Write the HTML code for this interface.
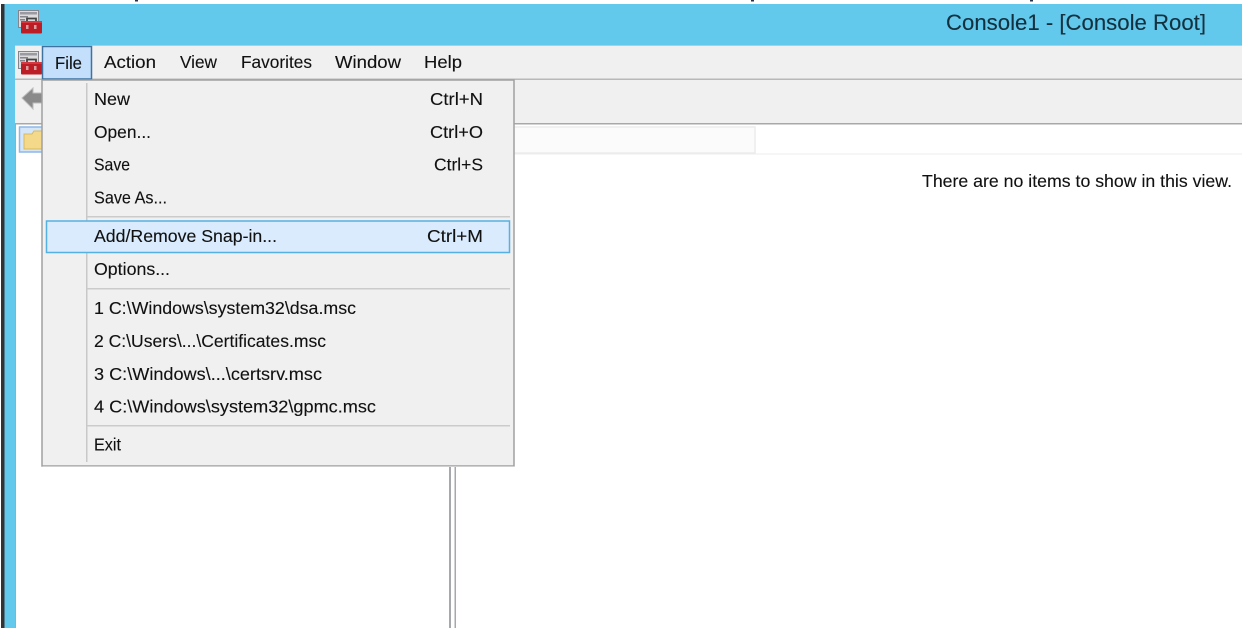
<!DOCTYPE html>
<html><head><meta charset="utf-8"><style>
html,body{margin:0;padding:0;background:#fff;width:1253px;height:642px;overflow:hidden}
svg{display:block}
text{font-family:"Liberation Sans",sans-serif;font-size:17.500px;fill:#111;stroke:#111;stroke-width:.12px;filter:blur(.25px)}
</style></head><body>
<svg width="1253" height="642" viewBox="0 0 1253 642" xmlns="http://www.w3.org/2000/svg">
<defs>
<g id="tool">
<rect x="0.500" y="0.500" width="20" height="17" fill="#dcdcdc" stroke="#85858d"/>
<rect x="2" y="2" width="17" height="2.500" fill="#9a9aa2"/>
<rect x="2" y="6" width="8" height="1.500" fill="#85858d"/>
<rect x="2" y="9" width="5" height="1.500" fill="#85858d"/>
<path d="M9 12v-3.500h9V12" fill="none" stroke="#444" stroke-width="1.800"/>
<rect x="3" y="11" width="21" height="12.500" rx="1" fill="#bd1e26"/>
<rect x="3" y="11" width="21" height="2" fill="#d63a40"/>
<rect x="8" y="15" width="2.500" height="4" fill="#d9a0a0"/>
<rect x="16" y="15" width="2.500" height="4" fill="#d9a0a0"/>
</g>
</defs>
<rect width="1253" height="642" fill="#fff"/>
<!-- top specks -->
<rect x="135" y="0" width="3" height="1.500" fill="#26324a"/>
<rect x="751" y="0" width="3" height="1.500" fill="#26324a"/>
<rect x="1030" y="0" width="3" height="1.500" fill="#26324a"/>
<!-- window frame -->
<rect x="1" y="4" width="3.500" height="624" fill="#333"/>
<rect x="4.500" y="4" width="10.500" height="624" fill="#63c9ec"/>
<rect x="15" y="45" width="1.500" height="583" fill="#a6a8ad"/>
<rect x="4.500" y="4" width="1237.500" height="41" fill="#63c9ec"/>
<!-- bars -->
<rect x="15" y="45" width="1227" height="34" fill="#f0f0f0"/>
<rect x="15" y="45" width="1227" height="1" fill="#a9cfe0"/>
<rect x="15" y="78.500" width="1227" height="1.500" fill="#b8b8b8"/>
<rect x="15" y="80" width="1227" height="43" fill="#f0f0f0"/>
<rect x="15" y="123" width="1227" height="1.500" fill="#a8a8a8"/>
<rect x="16" y="124.500" width="1226" height="503.500" fill="#fff"/>
<!-- header of right pane -->
<rect x="456" y="127" width="299" height="26" fill="#fbfbfb" stroke="#ececec" stroke-width="1.500"/>
<rect x="456" y="153.500" width="786" height="1" fill="#ececec"/>
<!-- splitter -->
<rect x="449" y="124" width="2" height="504" fill="#a6a8ad"/>
<rect x="454.500" y="124" width="1.500" height="504" fill="#a6a8ad"/>
<!-- title -->
<text x="946" y="30" textLength="260" lengthAdjust="spacingAndGlyphs" style="font-size:22.500px;fill:#13303e;stroke:#13303e">Console1 - [Console Root]</text>
<use href="#tool" x="18" y="10"/>
<use href="#tool" x="18" y="51"/>
<!-- back arrow -->
<path d="M22 98l11-10v5h10v10H33v6z" fill="#8a8a8a" stroke="#bcbcbc"/>
<!-- tree item -->
<rect x="19.500" y="127" width="24" height="25" fill="#d5e6f9" stroke="#8fb7e6" stroke-width="1.500"/>
<path d="M24 134h8l2-3h10v18H24z" fill="#f4d98a" stroke="#d9b95e"/>
<!-- menubar -->
<rect x="42.500" y="46.500" width="49" height="32.500" fill="#c4dffc" stroke="#3f729f" stroke-width="1.500"/>
<text x="55" y="69" textLength="27" lengthAdjust="spacingAndGlyphs">File</text>
<text x="104" y="68" textLength="52" lengthAdjust="spacingAndGlyphs">Action</text>
<text x="180" y="68" textLength="37" lengthAdjust="spacingAndGlyphs">View</text>
<text x="241" y="68" textLength="71" lengthAdjust="spacingAndGlyphs">Favorites</text>
<text x="335" y="68" textLength="66" lengthAdjust="spacingAndGlyphs">Window</text>
<text x="424" y="68" textLength="38" lengthAdjust="spacingAndGlyphs">Help</text>
<!-- menu -->
<rect x="42" y="80" width="472" height="386" fill="#f0f0f0" stroke="#a0a0a0" stroke-width="1.500"/>
<rect x="42.500" y="466" width="472" height="1" fill="#cfcfcf"/>
<rect x="86" y="83" width="1.500" height="379" fill="#c8c8c8"/>
<rect x="87" y="216" width="423" height="1.500" fill="#cbcbcb"/>
<rect x="87" y="288" width="423" height="1.500" fill="#cbcbcb"/>
<rect x="87" y="425" width="423" height="1.500" fill="#cbcbcb"/>
<rect x="46.500" y="221" width="463" height="31.500" fill="#d9ebfd" stroke="#54b1e2" stroke-width="1.500"/>
<text x="94" y="105" textLength="36" lengthAdjust="spacingAndGlyphs">New</text>
<text x="94" y="138" textLength="57" lengthAdjust="spacingAndGlyphs">Open...</text>
<text x="94" y="170.500" textLength="36" lengthAdjust="spacingAndGlyphs">Save</text>
<text x="94" y="203.500" textLength="73" lengthAdjust="spacingAndGlyphs">Save As...</text>
<text x="94" y="242" textLength="183" lengthAdjust="spacingAndGlyphs">Add/Remove Snap-in...</text>
<text x="94" y="275" textLength="76" lengthAdjust="spacingAndGlyphs">Options...</text>
<text x="94" y="314" textLength="262" lengthAdjust="spacingAndGlyphs">1 C:\Windows\system32\dsa.msc</text>
<text x="94" y="347" textLength="232" lengthAdjust="spacingAndGlyphs">2 C:\Users\...\Certificates.msc</text>
<text x="94" y="380" textLength="228" lengthAdjust="spacingAndGlyphs">3 C:\Windows\...\certsrv.msc</text>
<text x="94" y="412.500" textLength="282" lengthAdjust="spacingAndGlyphs">4 C:\Windows\system32\gpmc.msc</text>
<text x="94" y="450.500" textLength="27" lengthAdjust="spacingAndGlyphs">Exit</text>
<text x="430" y="105" textLength="53" lengthAdjust="spacingAndGlyphs">Ctrl+N</text>
<text x="430" y="138" textLength="53" lengthAdjust="spacingAndGlyphs">Ctrl+O</text>
<text x="434" y="170.500" textLength="49" lengthAdjust="spacingAndGlyphs">Ctrl+S</text>
<text x="427" y="242" textLength="56" lengthAdjust="spacingAndGlyphs">Ctrl+M</text>
<!-- empty view -->
<text x="922" y="187" textLength="310" lengthAdjust="spacingAndGlyphs">There are no items to show in this view.</text>
</svg>
</body></html>
